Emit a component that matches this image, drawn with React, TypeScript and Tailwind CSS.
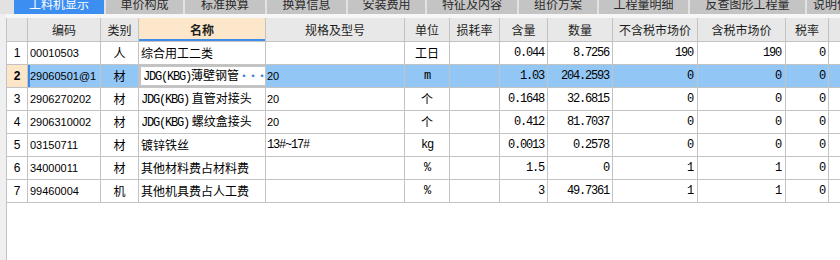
const tabs: { label: string; w: string }[] = [
  { label: '工料机显示', w: 'w-[90px]' },
  { label: '单价构成', w: 'w-[77px]' },
  { label: '标准换算', w: 'w-[80px]' },
  { label: '换算信息', w: 'w-[79px]' },
  { label: '安装费用', w: 'w-[77px]' },
  { label: '特征及内容', w: 'w-[90px]' },
  { label: '组价方案', w: 'w-[78px]' },
  { label: '工程量明细', w: 'w-[89px]' },
  { label: '反查图形工程量', w: 'w-[115px]' },
  { label: '说明信息', w: 'w-[60px]' },
];

// column widths, right border included
const W = ['w-[21px]', 'w-[73px]', 'w-[38px]', 'w-[127px]', 'w-[139px]', 'w-[45px]', 'w-[50px]', 'w-[48px]', 'w-[65px]', 'w-[85px]', 'w-[88px]', 'w-[43px]'];
const headers = ['', '编码', '类别', '名称', '规格及型号', '单位', '损耗率', '含量', '数量', '不含税市场价', '含税市场价', '税率'];

type Row = {
  code: string;
  kind: string;
  name: string;
  spec: string;
  unit: string;
  qty: string;
  amount: string;
  priceEx: string;
  priceIn: string;
  tax: string;
};

const rows: Row[] = [
  { code: '00010503', kind: '人', name: '综合用工二类', spec: '', unit: '工日', qty: '0.044', amount: '8.7256', priceEx: '190', priceIn: '190', tax: '0' },
  { code: '29060501@1', kind: '材', name: 'JDG(KBG)薄壁钢管', spec: '20', unit: 'm', qty: '1.03', amount: '204.2593', priceEx: '0', priceIn: '0', tax: '0' },
  { code: '2906270202', kind: '材', name: 'JDG(KBG) 直管对接头', spec: '20', unit: '个', qty: '0.1648', amount: '32.6815', priceEx: '0', priceIn: '0', tax: '0' },
  { code: '2906310002', kind: '材', name: 'JDG(KBG) 螺纹盒接头', spec: '20', unit: '个', qty: '0.412', amount: '81.7037', priceEx: '0', priceIn: '0', tax: '0' },
  { code: '03150711', kind: '材', name: '镀锌铁丝', spec: '13#~17#', unit: 'kg', qty: '0.0013', amount: '0.2578', priceEx: '0', priceIn: '0', tax: '0' },
  { code: '34000011', kind: '材', name: '其他材料费占材料费', spec: '', unit: '%', qty: '1.5', amount: '0', priceEx: '1', priceIn: '1', tax: '0' },
  { code: '99460004', kind: '机', name: '其他机具费占人工费', spec: '', unit: '%', qty: '3', amount: '49.7361', priceEx: '1', priceIn: '1', tax: '0' },
];

const cjk = "font-['Noto_Sans_CJK_SC','Noto_Sans',sans-serif] text-[12px]";
const mono = "font-['Liberation_Mono','Noto_Sans_CJK_SC',monospace] text-[12px] tracking-[-1.2px]";
const sans = "font-['Liberation_Sans',Arial,sans-serif] text-[11px]";

// ASCII prefix like "JDG(KBG)" is drawn narrow, the rest in CJK
const Name = ({ text }: { text: string }) => {
  const m = text.match(/^([A-Za-z()]+)(.*)$/);
  if (!m) return <span>{text}</span>;
  return (
    <span className="whitespace-pre">
      <span className={mono}>{m[1]}</span>
      {m[2]}
    </span>
  );
};

const App = () => {
  return (
    <div className="w-[840px] h-[260px] bg-white overflow-hidden text-black">
      {/* tab strip, top half is cut off */}
      <div className="flex h-[14px] bg-[#e2e2e2] pl-[14px] gap-[2px] overflow-hidden">
        {tabs.map((t, i) => (
          <div
            key={t.label}
            className={`${t.w} shrink-0 h-[14px] flex justify-center overflow-hidden ${i === 0 ? 'bg-[#3c8ef0] text-white' : 'bg-[#c4c4c4] text-[#2a2a2a]'}`}
          >
            <span className={`${cjk} leading-[16px] -mt-[4px] whitespace-nowrap`}>{t.label}</span>
          </div>
        ))}
      </div>

      <div className="flex h-[246px]">
        <div className="w-[6px] shrink-0 bg-[#efefef]" />
        <div className="flex-1 flex flex-col">
          <div className="h-[4px] bg-[#f7f7f7]" />
          <div className="border-l border-[#c3c3c3] flex-1">
            {/* header */}
            <div className="flex h-[24px] bg-[#e8e8e8] border-b border-[#c3c3c3]">
              {headers.map((h, i) => (
                <div
                  key={i}
                  className={`${W[i]} shrink-0 h-full border-r border-[#c3c3c3] flex items-center justify-center ${cjk} text-[#1e1e1e] ${i === 3 ? 'bg-[#fde7cb] font-bold shadow-[inset_0_-2px_0_#3d8ee8]' : ''}`}
                >
                  {h}
                </div>
              ))}
              <div className="flex-1" />
            </div>

            {rows.map((r, idx) => {
              const sel = idx === 1;
              const cell = 'shrink-0 h-full border-r border-[#c3c3c3] flex items-center overflow-hidden whitespace-nowrap';
              return (
                <div key={r.code} className={`flex h-[23px] border-b border-[#c3c3c3] ${sel ? 'bg-[#92c6f5]' : 'bg-white'}`}>
                  <div
                    className={`${W[0]} ${cell} justify-center ${sel ? 'bg-[#fde6c8] font-bold' : 'bg-white'} font-['Liberation_Sans',Arial,sans-serif] text-[12px]`}
                  >
                    {idx + 1}
                  </div>
                  <div className={`${W[1]} ${cell} pl-[2px] ${sans} ${sel ? 'shadow-[inset_2px_0_0_#3b8be6]' : ''}`}>
                    {r.code}
                  </div>
                  <div className={`${W[2]} ${cell} justify-center ${cjk}`}>{r.kind}</div>
                  <div
                    className={`${W[3]} ${cell} pl-[2px] ${cjk} ${sel ? 'bg-white border-2 border-[#6f6f6f] justify-between pr-[6px]' : ''}`}
                  >
                    <Name text={r.name} />
                    {sel && <span className="text-[#3a7fd8] text-[10px] font-bold tracking-[-1px] -mt-[2px]">···</span>}
                  </div>
                  <div className={`${W[4]} ${cell} pl-[1px] ${r.spec.includes('#') ? mono : sans}`}>{r.spec}</div>
                  <div className={`${W[5]} ${cell} justify-center ${/[a-z%]/.test(r.unit) ? mono : cjk}`}>{r.unit}</div>
                  <div className={`${W[6]} ${cell}`} />
                  <div className={`${W[7]} ${cell} justify-end pr-[3px] ${mono}`}>{r.qty}</div>
                  <div className={`${W[8]} ${cell} justify-end pr-[3px] ${mono}`}>{r.amount}</div>
                  <div className={`${W[9]} ${cell} justify-end pr-[4px] ${mono}`}>{r.priceEx}</div>
                  <div className={`${W[10]} ${cell} justify-end pr-[4px] ${mono}`}>{r.priceIn}</div>
                  <div className={`${W[11]} ${cell} justify-end pr-[3px] ${mono}`}>{r.tax}</div>
                  <div className="flex-1" />
                </div>
              );
            })}
          </div>
        </div>
      </div>
    </div>
  );
};

export default App;
